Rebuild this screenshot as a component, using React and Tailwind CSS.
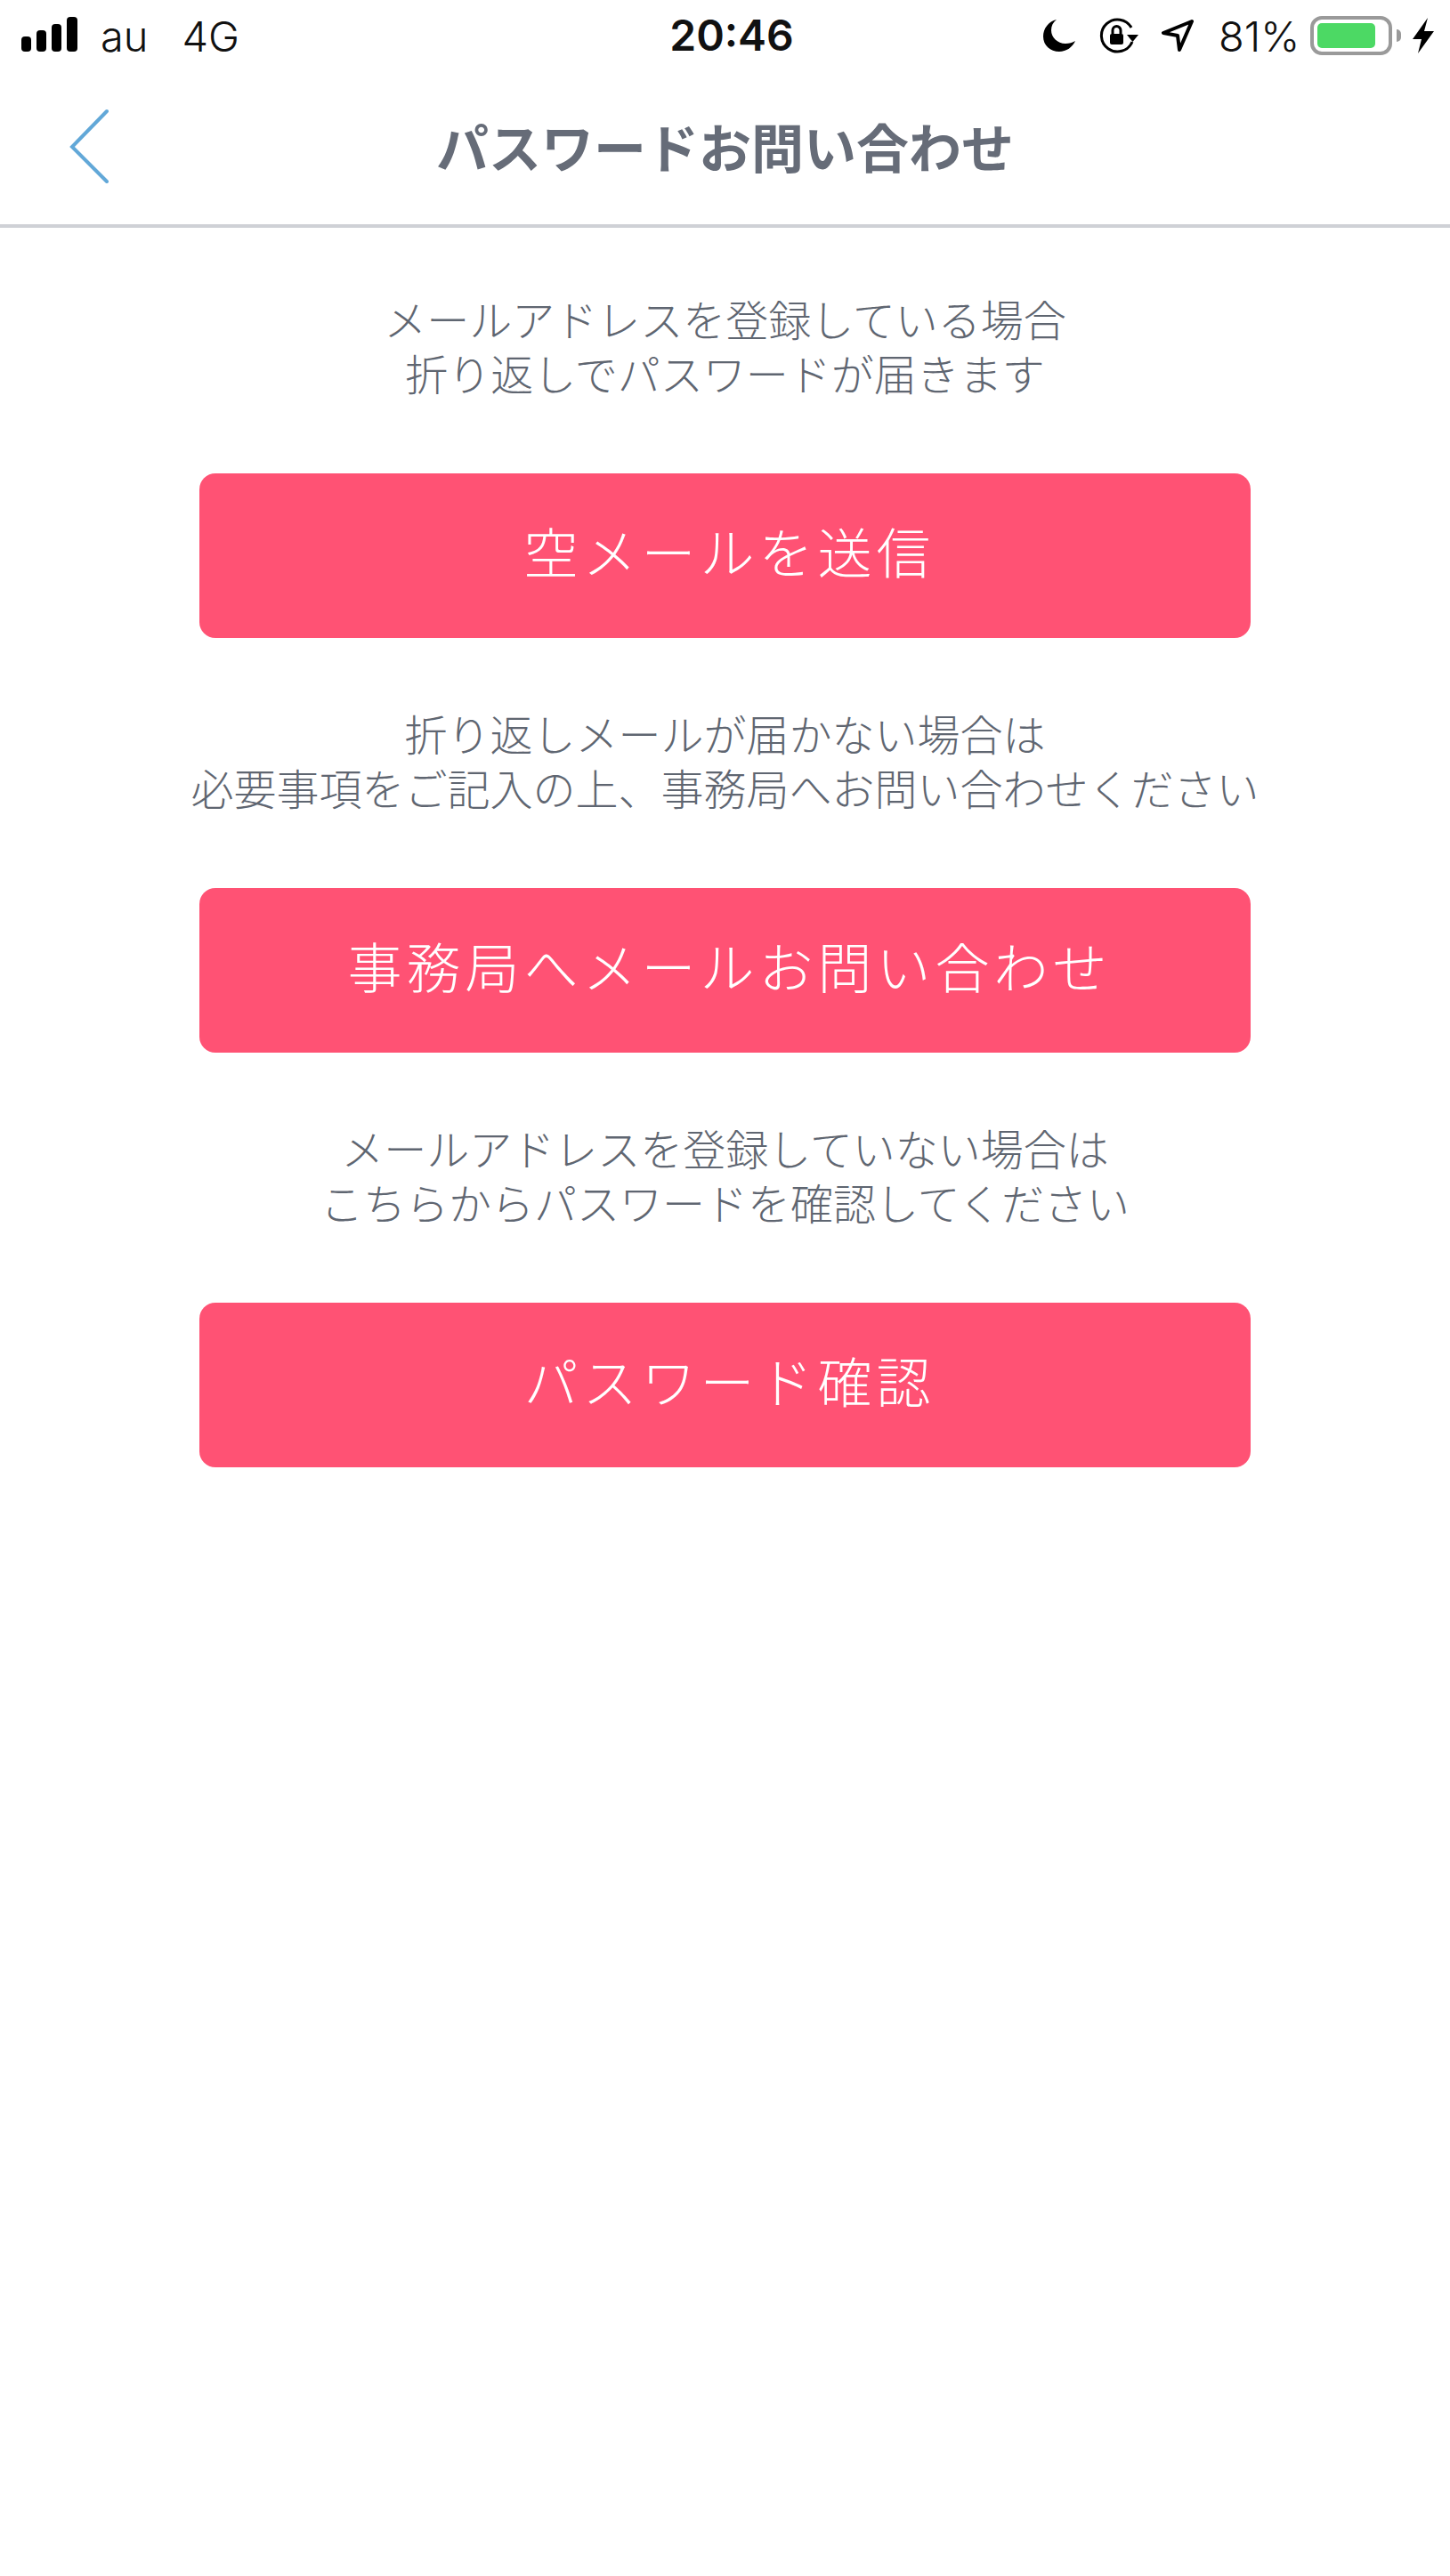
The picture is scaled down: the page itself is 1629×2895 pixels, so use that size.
import React from 'react'

const sections = [
  { lines: ['メールアドレスを登録している場合', '折り返しでパスワードが届きます'], label: '空メールを送信' },
  { lines: ['折り返しメールが届かない場合は', '必要事項をご記入の上、事務局へお問い合わせください'], label: '事務局へメールお問い合わせ' },
  { lines: ['メールアドレスを登録していない場合は', 'こちらからパスワードを確認してください'], label: 'パスワード確認' },
]

function StatusBar() {
  return (
    <div className="grid h-[80px] grid-cols-[752px_140px_1fr] items-center font-['Inter','Liberation_Sans',sans-serif] text-[47px] leading-none text-[#111]">
      <div className="flex items-center pl-6">
        <svg width="64" height="40" viewBox="0 0 64 40" fill="#000" className="mt-[-2px]">
          <rect x="0" y="22" width="11" height="17" rx="4" />
          <rect x="17" y="15" width="11" height="24" rx="4" />
          <rect x="34" y="8" width="11" height="31" rx="4" />
          <rect x="51" y="0" width="12" height="39" rx="4" />
        </svg>
        <span className="ml-[25px] font-light">au</span>
        <span className="ml-[38px] font-light">4G</span>
      </div>
      <div className="text-center text-[48px] font-semibold whitespace-nowrap">20:46</div>
      <div className="flex items-center pl-[280px]">
        <svg width="36" height="36" viewBox="0 0 36 36" fill="#000">
          <path d="M15 0C6 2 0 10 0 19c0 10 8 17 18 17 8 0 15-5 18-12-3 2-7 3-11 3-9 0-16-7-16-15 0-5 2-9 6-12z" />
        </svg>
        <svg width="46" height="40" viewBox="0 0 46 40" fill="none" className="ml-[26px]">
          <path d="M37 11A18 18 0 1 0 38 27" stroke="#000" strokeWidth="3" />
          <path d="M32 19h13l-6.500 8z" fill="#000" />
          <rect x="13" y="18" width="15" height="12" rx="2" fill="#000" />
          <path d="M16 18v-4a4.500 4.500 0 0 1 9 0v4" stroke="#000" strokeWidth="3" />
        </svg>
        <svg width="36" height="36" viewBox="0 0 36 36" fill="none" className="ml-[25px]">
          <path d="M34 2 2 15l16 3 2 16z" stroke="#000" strokeWidth="4" strokeLinejoin="round" />
        </svg>
        <span className="ml-[28px] w-[88px] font-light whitespace-nowrap">81%</span>
        <div className="ml-[15px] h-[44px] w-[92px] rounded-[13px] border-[4px] border-[#9a9a9a] p-[4px]">
          <div className="h-full w-[65px] rounded-[5px] bg-[#4cd964]" />
        </div>
        <div className="ml-[5px] h-[14px] w-[5px] rounded-r-full bg-[#9a9a9a]" />
        <svg width="24" height="40" viewBox="0 0 24 40" fill="#000" className="ml-[13px]">
          <path d="M17 0 0 24h10L6 40l18-25H13z" />
        </svg>
      </div>
    </div>
  )
}

function NavBar() {
  return (
    <div className="grid h-[176px] grid-cols-[1fr_auto_1fr] items-center border-b-[4px] border-[#cfd1d6]">
      <div className="pb-[4px] pl-[78px]">
        <svg width="46" height="84" viewBox="0 0 46 84" fill="none" stroke="#62a8d8" strokeWidth="4" strokeLinecap="round" className="block">
          <path d="M42 3 3 43l39 39" />
        </svg>
      </div>
      <h1 className="pb-[3px] text-[59px] font-bold text-[#666c78]">パスワードお問い合わせ</h1>
      <div />
    </div>
  )
}

export default function App() {
  return (
    <div className="h-[2895px] w-[1629px] bg-white font-['Noto_Sans_CJK_JP',sans-serif]">
      <StatusBar />
      <NavBar />
      <div className="flex flex-col items-center gap-[76px] pt-[71px]">
        {sections.map((section) => (
          <div key={section.label} className="flex flex-col items-center gap-[83px]">
            <p className="text-center text-[48px] leading-[61px] font-light text-[#5f6671]">
              {section.lines.map((line) => (
                <span key={line} className="block">{line}</span>
              ))}
            </p>
            <button className="h-[185px] w-[1181px] rounded-[18px] bg-[#ff5274] pb-[11px] pl-[10px] text-[61px] font-light tracking-[5px] text-white">
              {section.label}
            </button>
          </div>
        ))}
      </div>
    </div>
  )
}
